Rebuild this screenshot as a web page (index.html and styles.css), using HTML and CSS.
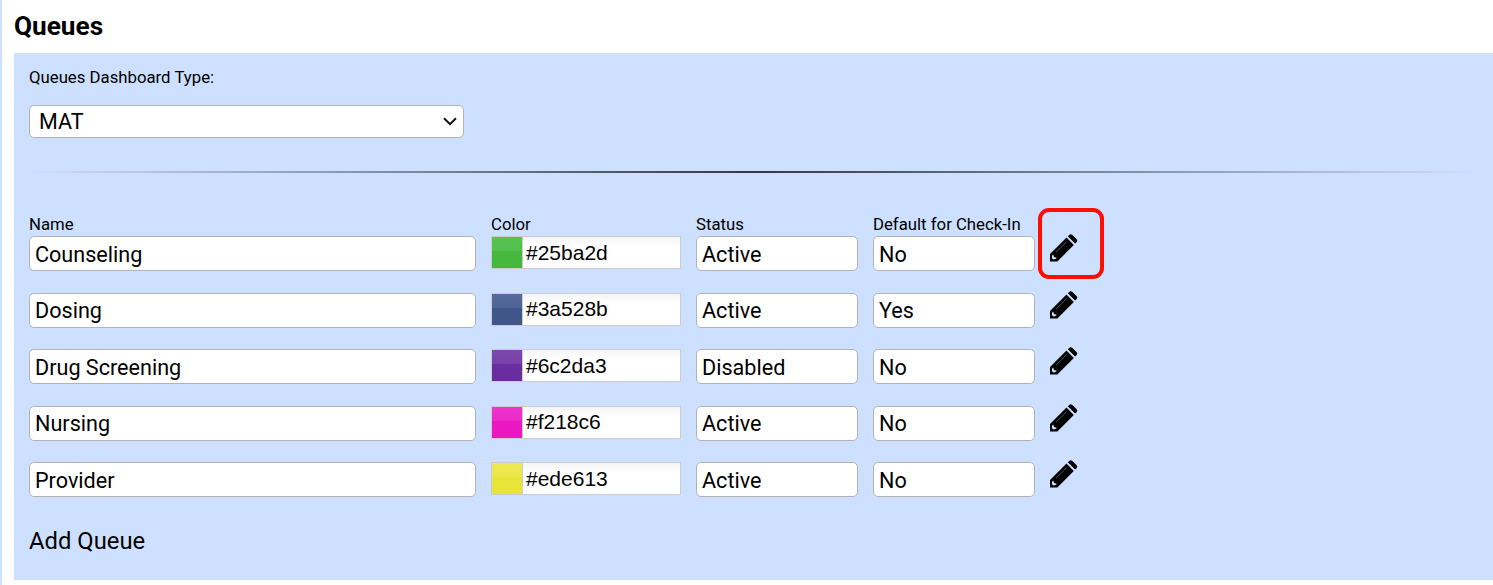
FILE: index.html
```html
<!DOCTYPE html>
<html lang="en">
<head>
  <meta charset="UTF-8">
  <meta name="viewport" content="width=device-width, initial-scale=1.0">
  <title>Queues</title>
  <link rel="stylesheet" href="styles.css">
</head>
<body>
  <svg width="0" height="0" class="sprite">
    <symbol id="pencil" viewBox="0 0 28 28">
      <path d="M0 27.500V20L16.500 3.600L23.800 10.900L7.400 27.500ZM17.800 2.300L19.500 0.700Q20.800 -0.400 22.100 0.700L26.700 5.300Q27.800 6.600 26.700 7.900L25.100 9.600Z" fill="#000"/>
      <path d="M2.100 21.500L3.300 20.400L4 23.100L6.800 23.800L5.700 25L3.300 25.600L1.900 24.200Z" fill="#cde0ff"/>
      <path d="M6 18.200L16.600 7.700" stroke="#6f7a8c" stroke-width="0.700" fill="none"/>
    </symbol>
  </svg>

  <main class="page">
    <h1>Queues</h1>

    <section class="panel">
      <div class="type-label">Queues Dashboard Type:</div>
      <div class="select">
        <span>MAT</span>
        <svg class="chevron" viewBox="0 0 14 9"><path d="M1 1.200L7 7.200L13 1.200" fill="none" stroke="#111" stroke-width="2"/></svg>
      </div>

      <hr>

      <div class="queue-row queue-head">
        <span>Name</span>
        <span>Color</span>
        <span>Status</span>
        <span>Default for Check-In</span>
      </div>

      <div class="queue-row">
        <div class="field">Counseling</div>
        <div class="color-field"><span class="swatch green"></span>#25ba2d</div>
        <div class="field">Active</div>
        <div class="field">No</div>
        <a class="edit highlighted"><svg><use href="#pencil"/></svg></a>
      </div>
      <div class="queue-row">
        <div class="field">Dosing</div>
        <div class="color-field"><span class="swatch blue"></span>#3a528b</div>
        <div class="field">Active</div>
        <div class="field">Yes</div>
        <a class="edit"><svg><use href="#pencil"/></svg></a>
      </div>
      <div class="queue-row">
        <div class="field">Drug Screening</div>
        <div class="color-field"><span class="swatch purple"></span>#6c2da3</div>
        <div class="field">Disabled</div>
        <div class="field">No</div>
        <a class="edit"><svg><use href="#pencil"/></svg></a>
      </div>
      <div class="queue-row">
        <div class="field">Nursing</div>
        <div class="color-field"><span class="swatch pink"></span>#f218c6</div>
        <div class="field">Active</div>
        <div class="field">No</div>
        <a class="edit"><svg><use href="#pencil"/></svg></a>
      </div>
      <div class="queue-row">
        <div class="field">Provider</div>
        <div class="color-field"><span class="swatch yellow"></span>#ede613</div>
        <div class="field">Active</div>
        <div class="field">No</div>
        <a class="edit"><svg><use href="#pencil"/></svg></a>
      </div>

      <a class="add-queue">Add Queue</a>
    </section>
  </main>
</body>
</html>
```

FILE: styles.css
```css
*,
*::after {
  box-sizing: border-box;
}

body {
  margin: 0;
  font-family: Roboto, Arial, sans-serif;
  color: #000;
  background-color: #fff;
}

.sprite {
  display: block;
}

.page {
  height: 585px;
  padding-left: 12px;
  border-left: 2px solid #cde0ff;
  overflow: hidden;
}

h1 {
  margin: 0;
  height: 53px;
  font-size: 26.2px;
  font-weight: 700;
  line-height: 52px;
}

/* Panel */
.panel {
  height: 527px;
  padding: 14px 15px 0;
  background-color: #cde0ff;
}

.type-label {
  height: 38px;
  font-size: 16.75px;
  line-height: 20px;
}

.select {
  display: flex;
  align-items: center;
  justify-content: space-between;
  width: 435px;
  height: 33px;
  padding: 0 6px 0 9px;
  font-size: 21.5px;
  background-color: #fff;
  border: 1px solid #b3b3b3;
  border-radius: 5px;
}

.chevron {
  width: 14px;
  height: 9px;
}

hr {
  height: 2px;
  margin: 33px 0 41px;
  border: 0;
  background-image: linear-gradient(to right, rgba(0, 0, 0, 0), rgba(0, 0, 0, 0.75), rgba(0, 0, 0, 0));
}

/* Queue rows */
.queue-row {
  display: grid;
  grid-template-columns: 447px 190px 162px 162px 28px;
  column-gap: 15px;
  align-items: start;
  height: 56.5px;
}

.queue-head {
  height: 22px;
  font-size: 16.75px;
  line-height: 20px;
}

.field {
  height: 35px;
  padding-left: 5px;
  font-size: 21.6px;
  line-height: 35px;
  background-color: #fff;
  border: 1px solid #b3b3b3;
  border-radius: 5px;
}

.color-field {
  display: flex;
  height: 33px;
  font-family: "Liberation Sans", Arial, sans-serif;
  font-size: 21px;
  line-height: 31px;
  background: linear-gradient(#f5f5f5, #fff 10px);
  border: 1px solid #ccc;
}

/* even rows start on a half pixel */
.queue-row:nth-child(even) .field {
  line-height: 34.4px;
}

.queue-row:nth-child(even) .color-field {
  line-height: 30px;
}

.swatch {
  width: 31px;
  height: 31px;
  margin-right: 3px;
  border-right: 1px solid #ccc;
}

.green {
  background: linear-gradient(#58c252, #52bf4b 45%, #46b83c 45%);
}

.blue {
  background: linear-gradient(#566a9b, #4f6496 45%, #405588 45%);
}

.purple {
  background: linear-gradient(#7d49ad, #7741a9 45%, #6a2d9f 45%);
}

.pink {
  background: linear-gradient(#ed35ca, #ec2bc8 45%, #ea17c3 45%);
}

.yellow {
  background: linear-gradient(#ece850, #ebe74b 45%, #e9e438 45%);
}

/* Edit icon */
.edit {
  position: relative;
  height: 28px;
  margin-top: -2px;
}

.edit svg {
  display: block;
  width: 28px;
  height: 28px;
}

.highlighted::after {
  content: "";
  position: absolute;
  top: -26px;
  left: -12px;
  width: 66px;
  height: 71px;
  border: 4px solid #fe0d00;
  border-radius: 11px;
}

.add-queue {
  display: block;
  margin-top: 8px;
  font-size: 23.8px;
  line-height: 28px;
}
```
